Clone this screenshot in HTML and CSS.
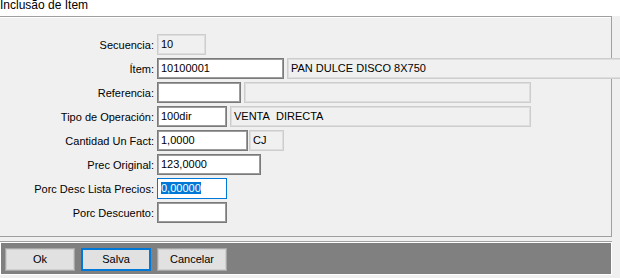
FILE: index.html
```html
<!DOCTYPE html>
<html>
<head>
<meta charset="utf-8">
<link rel="stylesheet" href="styles.css">
</head>
<body>
<div class="titlebar"><span class="title">Inclusão de Item</span></div>
<div class="panel">
  <div class="form">
    <div class="row">
      <div class="label">Secuencia:</div>
      <div class="ro w49">10</div>
    </div>
    <div class="row">
      <div class="label">Ítem:</div>
      <div class="tb w127">10100001</div>
      <div class="ro desc">PAN DULCE DISCO 8X750</div>
    </div>
    <div class="row">
      <div class="label">Referencia:</div>
      <div class="tb w84"></div>
      <div class="ro w287"></div>
    </div>
    <div class="row">
      <div class="label">Tipo de Operación:</div>
      <div class="tb w70">100dir</div>
      <div class="ro w301">VENTA&nbsp; DIRECTA</div>
    </div>
    <div class="row">
      <div class="label">Cantidad Un Fact:</div>
      <div class="tb w91">1,0000</div>
      <div class="ro w35 gap2">CJ</div>
    </div>
    <div class="row">
      <div class="label">Prec Original:</div>
      <div class="tb w104">123,0000</div>
    </div>
    <div class="row">
      <div class="label">Porc Desc Lista Precios:</div>
      <div class="tb focus w70"><span class="sel">0,00000</span></div>
    </div>
    <div class="row">
      <div class="label">Porc Descuento:</div>
      <div class="tb w70"></div>
    </div>
  </div>
</div>
<div class="buttonbar">
  <div class="btnrow">
    <div class="btn">Ok</div>
    <div class="btn default">Salva</div>
    <div class="btn">Cancelar</div>
  </div>
</div>
</body>
</html>
```
FILE: styles.css
```css
html, body {
  margin: 0;
  padding: 0;
  overflow: hidden;
}
body {
  width: 620px;
  height: 278px;
  background: #f0f0f0;
  font-family: "Liberation Sans", Arial, sans-serif;
  font-size: 11px;
  color: #000;
}
.titlebar {
  height: 16px;
  background: #fff;
  overflow: hidden;
}
.title {
  display: block;
  font-size: 12px;
  line-height: 12px;
  margin-top: -1px;
  white-space: nowrap;
}
.panel {
  box-sizing: border-box;
  width: 612px;
  height: 221px;
  border-top: 1px solid #a0a0a0;
  border-right: 1px solid #a0a0a0;
  border-bottom: 1px solid #a0a0a0;
  box-shadow: inset 0 1px 0 #fff;
}
.form {
  padding-top: 17px;
  display: flex;
  flex-direction: column;
  gap: 3px;
}
.row {
  display: flex;
  align-items: center;
  height: 21px;
}
.label {
  flex: none;
  width: 154px;
  text-align: right;
  white-space: nowrap;
  margin-right: 3px;
}
.tb, .ro {
  box-sizing: border-box;
  height: 21px;
  line-height: 19px;
  padding-left: 3px;
  white-space: nowrap;
  overflow: hidden;
  flex: none;
}
.tb {
  background: #fff;
  border: 1px solid #7a7a7a;
  box-shadow: inset 0 0 0 1px #9c9c9c;
}
.tb.focus {
  border-color: #0078d7;
  box-shadow: none;
}
.ro {
  background: #f0f0f0;
  border: 1px solid #cdcdcd;
  box-shadow: inset 0 0 0 1px #dedede;
  margin-left: 3px;
}
.row .label + .ro {
  margin-left: 0;
}
.sel {
  background: #0078d7;
  color: #fff;
  display: inline-block;
  line-height: 12px;
  vertical-align: middle;
  margin-top: -2px;
}
.w49 { width: 49px; }
.w127 { width: 127px; }
.w84 { width: 84px; }
.w70 { width: 70px; }
.w91 { width: 91px; }
.w104 { width: 104px; }
.w287 { width: 287px; }
.w301 { width: 301px; }
.w35 { width: 35px; }
.gap2 { margin-left: 1px; }
.desc { width: 340px; }
.buttonbar {
  box-sizing: border-box;
  width: 612px;
  margin-top: 4px;
  border-top: 1px solid #a0a0a0;
}
.btnrow {
  box-sizing: border-box;
  height: 33px;
  border: 1px solid #fff;
  background: #808080;
  padding: 4px 0 0 4px;
  display: flex;
  gap: 6px;
  align-items: flex-start;
}
.btn {
  box-sizing: border-box;
  width: 70px;
  height: 23px;
  margin-top: 1px;
  background: #e1e1e1;
  border: 1px solid #a6a6a6;
  box-shadow: inset 0 0 0 1px #cfcfcf;
  text-align: center;
  line-height: 21px;
}
.btn.default {
  border: 2px solid #0078d7;
  box-shadow: none;
  line-height: 19px;
}
```
